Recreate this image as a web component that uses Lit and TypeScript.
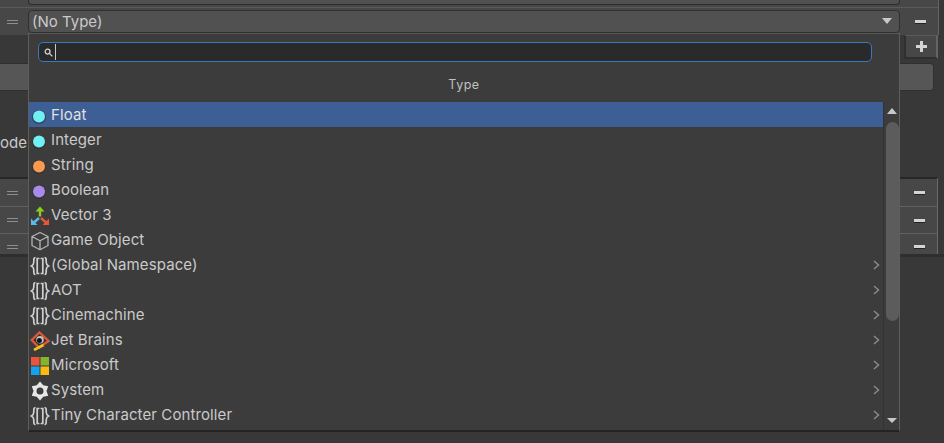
import { LitElement, html, css, svg } from "lit";
import { customElement } from "lit/decorators.js";

const dot = (c: string) => svg`<svg class="ic" viewBox="0 0 20 20"><circle cx="9" cy="11" r="7" fill="#2c2c2c" opacity=".55"/><circle cx="9" cy="10.5" r="6" fill="${c}"/></svg>`;
const ns = svg`<svg class="ic" viewBox="0 0 20 20" fill="none" stroke="#cfcfcf" stroke-width="1.7">
<path d="M5.500 1.500C3.600 1.500 3.800 3.500 3.800 6c0 2.500-1 3.300-2.300 4 1.300.7 2.300 1.500 2.300 4 0 2.500-.2 4.500 1.700 4.500"/>
<path d="M14.500 1.500c1.900 0 1.700 2 1.700 4.500 0 2.500 1 3.300 2.300 4-1.300.7-2.300 1.500-2.300 4 0 2.500.2 4.500-1.700 4.500"/>
<path d="M9.400 2.500H7.200v15h2.200M10.600 2.500h2.200v15h-2.200"/></svg>`;
const vec = svg`<svg class="ic" viewBox="0 0 20 20" fill="none" stroke-width="2.400">
<path d="M10 10.500V4" stroke="#8fce1e"/><path d="M5.500 5.500 10 .5l4.500 5z" fill="#8fce1e"/>
<path d="M9 12 4 16.500" stroke="#5cb8e8"/><path d="M1 12.500v6.500h6.500z" fill="#5cb8e8"/>
<path d="M11 12l5 4.500" stroke="#e8563a"/><path d="M19 12.500v6.500h-6.500z" fill="#e8563a"/></svg>`;
const cube = svg`<svg class="ic" viewBox="0 0 20 20" fill="none" stroke="#b4b4b4" stroke-width="1.300" stroke-linejoin="round">
<path d="M10 1.500 18 5.500v9L10 18.800 2 14.500v-9zM2 5.500l8 4.300 8-4.300M10 9.800v9"/></svg>`;
const jet = svg`<svg class="ic" viewBox="0 0 20 20">
<path d="M9.500 1.500 18.500 10 9 16.500 1.800 9z" fill="#2e2e2e" stroke="#e0583c" stroke-width="2.400"/>
<circle cx="10" cy="8.800" r="3.800" fill="#c4c4c4"/><circle cx="9.400" cy="9.500" r="2.500" fill="#141414"/>
<path d="M4 19 13.500 14" stroke="#f3c31c" stroke-width="2.600"/></svg>`;
const ms = svg`<svg class="ic" viewBox="0 0 20 20">
<rect x="1" y="1" width="8.500" height="8.500" fill="#e8553c"/><rect x="10.500" y="1" width="8.500" height="8.500" fill="#86b52a"/>
<rect x="1" y="10.500" width="8.500" height="8.500" fill="#16a0ee"/><rect x="10.500" y="10.500" width="8.500" height="8.500" fill="#fdb913"/></svg>`;
const gear = svg`<svg class="ic" viewBox="0 0 20 20">
<path fill="#e6e6e6" fill-rule="evenodd" d="M10 .5l3.250 3.870 4.980.88L16.500 10l1.730 4.750-4.980.88L10 19.500l-3.250-3.870-4.980-.88L3.500 10 1.770 5.250l4.980-.88zM10 6.500a3.500 3.500 0 1 0 0 7 3.500 3.500 0 0 0 0-7z"/></svg>`;

const items: { label: string; icon: unknown; sub?: boolean }[] = [
  { label: "Float", icon: dot("#6ff0f5") },
  { label: "Integer", icon: dot("#6ff0f5") },
  { label: "String", icon: dot("#f99a50") },
  { label: "Boolean", icon: dot("#a68bea") },
  { label: "Vector 3", icon: vec },
  { label: "Game Object", icon: cube },
  { label: "(Global Namespace)", icon: ns, sub: true },
  { label: "AOT", icon: ns, sub: true },
  { label: "Cinemachine", icon: ns, sub: true },
  { label: "Jet Brains", icon: jet, sub: true },
  { label: "Microsoft", icon: ms, sub: true },
  { label: "System", icon: gear, sub: true },
  { label: "Tiny Character Controller", icon: ns, sub: true },
];

const grip = html`<span class="grip"></span>`;

@customElement("app-root")
export class AppRoot extends LitElement {
  static styles = css`
    :host { display: block; width: 944px; height: 443px; overflow: hidden; position: relative; background: #383838;
      font-family: Inter, "Noto Sans", sans-serif; font-size: 15px; color: #cacaca; }
    .top { height: 7px; background: #474747; border-bottom: 1px solid #5a5a5a; padding-left: 28px; padding-right: 38px; margin-right: 6px; box-shadow: 1px 0 0 #646464; }
    .top i { display: block; height: 4px; background: #515151; border: 1px solid #2c2c2c; border-top: 0; border-radius: 0 0 4px 4px; }
    .r1 { height: 27px; background: #474747; display: flex; align-items: center; margin-right: 6px; box-shadow: 1px 0 0 #646464; }
    .gcell { width: 28px; flex: none; display: flex; justify-content: center; padding-right: 3px; box-sizing: border-box; }
    .grip { display: block; width: 11px; height: 2px; border-top: 1px solid #8e8e8e; border-bottom: 1px solid #8e8e8e; }
    .drop { width: 872px; height: 23px; flex: none; box-sizing: border-box; margin-top: -1px; background: #515151; border: 1px solid #2f2f2f; border-radius: 4px;
      display: flex; align-items: center; justify-content: space-between; padding: 0 7px 0 3px; }
    .spacer { width: 872px; flex: none; }
    .tri { width: 0; height: 0; border-left: 5px solid transparent; border-right: 5px solid transparent; border-top: 6px solid #c8c8c8; }
    .minus { display: block; width: 11px; height: 3px; background: #d4d4d4; box-shadow: 0 1px 0 #232323; }
    .mcell { flex: 1; display: flex; justify-content: center; padding-left: 2px; }
    .addrow { height: 24px; display: flex; justify-content: flex-end; padding-right: 6px; }
    .add { width: 34px; height: 24px; box-sizing: border-box; background: #474747; border: 2px solid #2f2f2f; border-top: 1px solid #5a5a5a; border-right: 2px solid #646464; display: flex; align-items: center; justify-content: center; }
    .plus { position: relative; display: block; width: 11px; height: 3px; background: #d4d4d4; }
    .plus::after { content: ""; position: absolute; left: 4px; top: -4px; width: 3px; height: 11px; background: #d4d4d4; }
    .bar { margin: 4px 10px 0 0; height: 28px; box-sizing: border-box; background: #565656; border-top: 1px solid #303030; border-bottom: 1px solid #303030; border-right: 1px solid #303030; border-radius: 0 4px 4px 0; }
    .ode { height: 86px; display: flex; align-items: center; padding-top: 16px; box-sizing: border-box; }
    .list { height: 77px; box-sizing: border-box; margin-right: 6px; border-top: 2px solid #272727; border-right: 1px solid #6a6a6a; background: #474747; }
    .lrow { height: 28px; box-sizing: border-box; border-bottom: 1px solid #5f5f5f; display: flex; align-items: center; }
    .lrow:nth-child(2) { height: 27px; }
    .lrow:last-child { height: 20px; border-bottom: 0; padding-top: 5px; box-sizing: border-box; }
    .band { height: 3px; background: #2e2e2e; }

    .popup { position: absolute; left: 28px; top: 33px; width: 872px; height: 399px; box-sizing: border-box; background: #3c3c3c;
      border: 1px solid #5e5e5e; border-bottom: 2px solid #242424; border-top: 1px solid #585858; display: flex; flex-direction: column; }
    .searchwrap { padding: 8px 27px 0 9px; flex: none; box-sizing: border-box; height: 30px; }
    .search { height: 20px; box-sizing: border-box; background: #2a2a2a; border: 1px solid #3a78bd; border-radius: 5px; display: flex; align-items: center; padding-left: 5px; gap: 2px; }
    .search svg { width: 9px; height: 9px; flex: none; }
    .caret { width: 1px; height: 16px; background: #c8c8c8; }
    .title { height: 38px; flex: none; display: flex; align-items: center; justify-content: center; font-size: 12.5px; letter-spacing: .5px; color: #c0c0c0; padding-top: 3px; box-sizing: border-box; }
    .body { flex: 1; display: flex; min-height: 0; }
    .rows { flex: 1; }
    .row { height: 25px; box-sizing: border-box; display: flex; align-items: center; padding: 2px 16px 0 1px; letter-spacing: .1px; }
    .row.sel { background: #3e5f96; color: #e0e0e0; }
    .ic { width: 20px; height: 20px; flex: none; margin-right: 1px; }
    .row span { flex: 1; white-space: nowrap; position: relative; top: -1px; }
    .chev { width: 7px; height: 10px; flex: none; margin-right: -12px; position: relative; left: 1px; top: -1px; }
    .sb { width: 16px; flex: none; box-sizing: border-box; border-left: 1px solid #333; display: flex; flex-direction: column; align-items: center; }
    .up, .down { width: 0; height: 0; border-left: 5px solid transparent; border-right: 5px solid transparent; flex: none; }
    .up { border-bottom: 6px solid #c8c8c8; margin-top: 6px; }
    .thumb { width: 13px; height: 199px; margin-top: 8px; margin-left: 1px; background: #5c5c5c; border-radius: 7px; flex: none; }
    .down { border-top: 5px solid #c8c8c8; margin-top: 97px; }
  `;

  render() {
    return html`
      <div class="top"><i></i></div>
      <div class="r1">
        <div class="gcell">${grip}</div>
        <div class="drop">(No Type)<span class="tri"></span></div>
        <div class="mcell"><span class="minus"></span></div>
      </div>
      <div class="addrow"><div class="add"><span class="plus"></span></div></div>
      <div class="bar"></div>
      <div class="ode">ode</div>
      <div class="list">
        ${[0, 1, 2].map(() => html`<div class="lrow">
          <div class="gcell">${grip}</div><div class="spacer"></div>
          <div class="mcell"><span class="minus"></span></div></div>`)}
      </div>
      <div class="band"></div>

      <div class="popup">
        <div class="searchwrap"><div class="search">
          <svg viewBox="0 0 10 10" fill="none" stroke="#d8d8d8" stroke-width="1.400"><circle cx="4" cy="4" r="2.700"/><path d="M6 6l3.300 3.300"/></svg>
          <span class="caret"></span>
        </div></div>
        <div class="title">Type</div>
        <div class="body">
          <div class="rows">
            ${items.map((it, i) => html`<div class="row ${i === 0 ? "sel" : ""}">
              ${it.icon}<span>${it.label}</span>
              ${it.sub ? html`<svg class="chev" viewBox="0 0 7 10" fill="none" stroke="#8a8a8a" stroke-width="1.500"><path d="M1 1l4.500 4L1 9"/></svg>` : ""}
            </div>`)}
          </div>
          <div class="sb"><i class="up"></i><i class="thumb"></i><i class="down"></i></div>
        </div>
      </div>
    `;
  }
}
